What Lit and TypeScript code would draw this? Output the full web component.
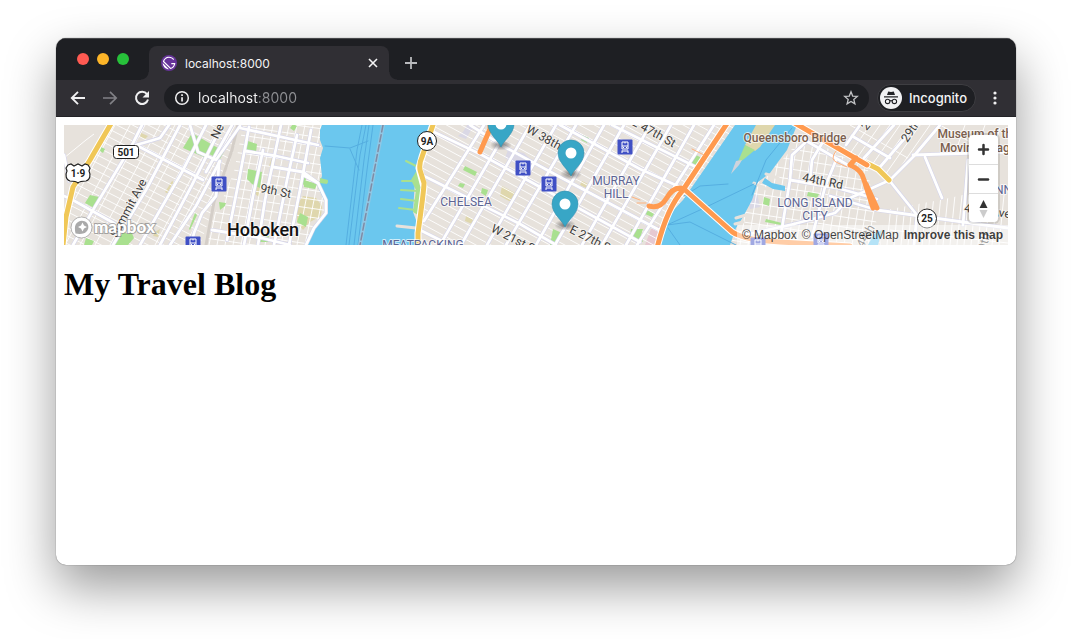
import { LitElement, html, css, svg } from "lit";
import { customElement, state } from "lit/decorators.js";

/** Parallel streets, each running from top to bottom and leaning by `lean`. */
const steep = (from: number, to: number, step: number, lean: number, top = 125, bottom = 245) => {
  let d = "";
  for (let x = from; x <= to; x += step) d += `M${x} ${top}L${x + lean} ${bottom}`;
  return d;
};

/** Parallel cross streets, each running left to right and dropping by `drop`. */
const cross = (left: number, right: number, from: number, to: number, step: number, drop: number) => {
  let d = "";
  for (let y = from; y <= to; y += step) d += `M${left} ${y}L${right} ${y + drop}`;
  return d;
};

const HEIGHTS = "M112 125H238L234 150L200 245H64L74 187L90 160Z";
const HOBOKEN = "M243 125H322L321 148L322 176L318 187L325 202L326 213L315 227L307 245H206L214 215L222 200L234 172Z";
const MANHATTAN = "M433 125H735L683 200L667 217L657 245H418L424 187L419 165Z";
const LIC = "M803 135L868 170L872 196L880 245H730L743 217L758 182L787 155Z";
const QUEENS_EAST = "M885 210L940 200L1008 185V245H880Z";
const QUEENS_NORTH = "M840 125H940L913 153L889 178L868 163L820 137Z";

const WATER = [
  "M322 125L320 130L320 140L323 148L320 158L322 176L318 187L325 202L326 213L315 227L308 237L307 245H416L416 220L413 212L415 180L418 163L424 140L429 125Z",
  "M735 125L683 200L667 217L657 245H730L736 228L743 217L752 200L758 182L770 173L775 166L787 150L797 125Z",
  "M765 178L772 183L785 186V191L773 189L762 183Z",
  "M868 245L874 234L882 230L878 245Z",
];

const PARKS = [
  "M192 133L218 148L215 157L207 153L206 158L183 148Z",
  "M222 150L224 152L220 159L217 157Z",
  "M248 141L257 144L256 152L246 150Z",
  "M248 169L262 172L260 188L252 184L247 179Z",
  "M90 195L99 197L96 209L85 203Z",
  "M189 229L195 213L197 215L190 230Z",
  "M101 147L105 149L103 153L100 151Z",
  "M300 213L308 217L306 227L297 222Z",
  "M86 238L94 241L92 245H84Z",
  "M114 243L120 231H131L134 238L128 245H114Z",
  "M258 237L269 236L268 242H259Z",
  "M293 124L297 126L294 131L290 128Z",
  "M219 202L226 203L225 206L220 210Z",
  "M303 174L307 176L304 185L300 182Z",
  "M304 180L317 184L315 189L304 187Z",
  "M417 170L423 187L418 215L413 212L416 190L411 180Z",
  "M320 178L328 180L327 184L320 183Z",
  "M465 166L477 172L475 176L463 170Z",
  "M482 188L488 190L486 196L481 193Z",
  "M460 183L465 184L463 188L458 186Z",
  "M553 229L562 233L557 245H550Z",
  "M631 229L643 229L641 235L643 242L636 239L630 240Z",
  "M582 135L589 138L587 143L581 140Z",
  "M694 154L702 158L698 167L690 163Z",
  "M647 210L654 214L652 217L645 214Z",
  "M745 145L755 150L744 159L737 164Z",
  "M764 197L770 199L769 206L763 204Z",
  "M808 192L819 194L817 198L807 196Z",
  "M766 219L782 223L781 225L765 222Z",
];

const SAND = [
  "M172 181L177 184L170 195L165 192Z",
  "M141 133L148 136L145 139L140 137Z",
  "M297 205L303 196L316 198L322 206L321 216L310 222L303 230L297 222Z",
  "M272 157L274 158L272 168L269 166Z",
  "M300 204L308 207L307 213L299 209Z",
  "M502 186L517 194L513 203L500 196Z",
  "M466 216L474 220L472 224L465 221Z",
  "M582 181L588 184L586 188L580 185Z",
  "M155 232L160 229L158 237L153 236Z",
  "M256 185L261 188L259 197L254 193Z",
];

const MAIN_ROADS = [
  "M142 125L133 143L123 160L93 210L73 245",
  "M169 125L160 138L150 141L136 145L203 180",
  "M180 125L146 190L113 245",
  "M206 125L182 172L140 245",
  "M222 125L192 185L160 245",
  "M64 196L71 199L112 222L128 232",
  "M190 125L198 152L216 160L240 126",
  "M219 162L218 178L216 196L202 213L194 233L191 245",
  "M220 161L196 206L170 245",
  "M232 125L206 172",
  "M64 155L69 181",
  "M249 127L239 180L227 240",
  "M263 150L253 196L244 245",
  "M281 125L265 200L258 245",
  "M297 135L287 180L274 245",
  "M311 130L300 190L289 245",
  "M245 151L276 156L308 163",
  "M273 167L303 172L318 183",
  "M240 128L318 145",
  "M303 175L318 183L326 200L326 213L314 228L306 245",
  "M212 230L262 238L290 245",
  "M510 125L440 245",
  "M484 125L424 221",
  "M530 125L461 245",
  "M556 125L487 245",
  "M576 125L506 245",
  "M604 125L536 245",
  "M624 125L555 245",
  "M650 125L582 245",
  "M671 125L602 245",
  "M694 125L626 245",
  "M714 125L637 245",
  "M434 132L480 154L640 242",
  "M424 176L520 224L556 245",
  "M470 125L503 146L560 177L663 232",
  "M560 125L640 169L680 187",
  "M612 125L694 166",
  "M420 230L450 245",
  "M805 143L792 155L790 180L780 240",
  "M803 139L853 168",
  "M824 140L812 160L810 181",
  "M790 180L837 188L877 199",
  "M836 160L825 187L812 237",
  "M794 224L835 213L850 198L890 180L913 157L940 125",
  "M913 155L1008 152",
  "M925 157L942 198",
  "M889 180L917 215L914 245",
  "M830 196L877 210L913 215L970 223L1008 228",
  "M968 160L963 225",
  "M860 125L846 145",
  "M894 125L864 158",
  "M852 136L890 158",
  "M916 125L880 167",
  "M736 237L794 224",
];

const FERRIES = [
  "M362 125L357 150L346 245M366 125L360 155L349 245M369 125L364 160L354 245M373 125L367 170L358 245",
  "M325 146L350 148L368 141M350 149L359 170",
  "M667 225L690 222L736 245M667 225L700 210L754 184M668 228L680 245M684 196L700 186L728 184M792 128L766 160L752 195",
];

const RAIL_STOPS = [[219, 184], [193, 244], [523, 168], [549, 184], [625, 147], [758, 245], [821, 241]];
const PINS = [[501, 125], [571, 154], [565, 205]];

const STREET_LABELS: Array<[string, number, number, number]> = [
  ["Summit Ave", 132, 210, -62],
  ["New", 223, 129, -64],
  ["9th St", 275, 195, 11],
  ["W 38th", 542, 141, 29],
  ["E 47th St", 652, 136, 29],
  ["W 21st St", 513, 243, 27],
  ["E 27th St", 590, 243, 27],
  ["44th Rd", 822, 185, 11],
  ["29th", 914, 133, -56],
  ["21st", 874, 122, -50],
  ["43rd Ave", 987, 215, 8],
  ["44th", 869, 238, -60],
  ["39th", 987, 246, -75],
];

@customElement("travel-map")
class TravelMap extends LitElement {
  static styles = css`
    :host { display: block; position: relative; overflow: hidden; height: 120px; font-family: "Liberation Sans", Arial, sans-serif; }
    .canvas { display: block; width: 100%; height: 120px; }
    .line { fill: none; stroke-linecap: round; stroke-linejoin: round; }
    .minor { fill: none; stroke: #fff; stroke-width: 1; opacity: 0.9; }
    .label { font-family: Roboto, "Open Sans", sans-serif; text-anchor: middle; paint-order: stroke; stroke-linejoin: round; stroke: #ffffffb3; stroke-width: 2px; }
    .street { font-size: 12px; fill: #3c3c3c; stroke: #f5f2ee; }
    .area { font-size: 12px; fill: #5d6594; }
    .place { font-size: 12px; font-weight: 500; fill: #7b5f4e; }
    .city { font-size: 18px; font-weight: 500; fill: #111; }
    .shield { font-family: Roboto, sans-serif; font-size: 10px; font-weight: 700; text-anchor: middle; fill: #222; }
    .wordmark { font-family: Lato, sans-serif; font-size: 17px; font-weight: 900; fill: #fff; stroke: #77777799; stroke-width: 2px; paint-order: stroke; }
    .logo { position: absolute; left: 6px; bottom: 4px; display: block; width: 90px; height: 26px; }
    .logo svg { display: block; }
    .zoom { position: absolute; top: 10px; right: 10px; display: flex; flex-direction: column; width: 29px; border-radius: 4px; overflow: hidden; background: #fff; box-shadow: 0 0 0 2px #0000001a; }
    .zoom button { display: block; height: 29px; padding: 0; border: 0; background: none; }
    .zoom button + button { border-top: 1px solid #ddd; }
    .zoom svg { display: block; width: 29px; height: 29px; }
    .credits { position: absolute; right: 0; bottom: 0; display: flex; gap: 5px; padding: 0 5px; background: #ffffff80; font-size: 12px; line-height: 20px; }
    .credits a { color: #000000bf; text-decoration: none; }
    .credits .improve { font-weight: 700; }
  `;

  private rail([x, y]: number[]) {
    return svg`<g transform="translate(${x - 7.5} ${y - 7.5})">
      <rect width="15" height="15" rx="1" fill="#4050c5"></rect>
      <path d="M4.500 2.500h6v7h-6z" fill="none" stroke="#fff" stroke-width="1"></path>
      <path d="M4.500 6.500h6M7.500 2.500v1.500" stroke="#fff" stroke-width="1"></path>
      <path d="M5.500 7.500h1v1h-1zM8.500 7.500h1v1h-1z" fill="#fff"></path>
      <path d="M4.500 11v2.500M10.500 11v2.500M4.500 11.500h6" stroke="#fff" stroke-width="1"></path>
    </g>`;
  }

  private pin([x, y]: number[]) {
    return svg`<g transform="translate(${x} ${y})">
      <ellipse cx="0" cy="20" rx="11" ry="5.500" fill="url(#shade)"></ellipse>
      <path d="M0 22C-2 16-13 9-13-1a13 13 0 0 1 26 0C13 9 2 16 0 22Z" fill="#38a6c6" stroke="#2f8fac" stroke-width=".6"></path>
      <circle cx="0" cy="-1" r="5.500" fill="#fff"></circle>
    </g>`;
  }

  private grid(id: string, area: string, lines: string) {
    return svg`<clipPath id=${id}><path d=${area}></path></clipPath>
      <path class="minor" clip-path="url(#${id})" d=${lines}></path>`;
  }

  render() {
    return html`
      <svg class="canvas" viewBox="64 125 944 120" preserveAspectRatio="xMidYMid slice" role="img" aria-label="Map of Hoboken, Manhattan and Long Island City">
        <defs>
          <radialGradient id="shade"><stop offset="0" stop-opacity=".5"></stop><stop offset="1" stop-opacity="0"></stop></radialGradient>
        </defs>
        <rect x="64" y="125" width="944" height="120" fill="#e7e2dc"></rect>
        ${SAND.map((d) => svg`<path d=${d} fill="#dfd7ad"></path>`)}
        <path d="M645 245L651 229L660 226L655 245Z" fill="#e6c9d1"></path>
        <path d="M463 132L467 125H474L466 139L458 136ZM508 150L524 153L534 163L530 170L505 158ZM748 200L757 193L760 207L750 209Z" fill="#dad8e5"></path>
        ${this.grid("heights", HEIGHTS, steep(70, 300, 15, -65) + cross(64, 240, 50, 245, 8, 90))}
        ${this.grid("hoboken", HOBOKEN, steep(225, 340, 8, -24) + cross(205, 330, 112, 245, 9, 18))}
        ${this.grid("manhattan", MANHATTAN, cross(415, 735, -60, 245, 8, 173))}
        ${this.grid("lic", LIC, steep(760, 910, 8, -20) + cross(730, 890, 110, 245, 10, 24))}
        ${this.grid("east", QUEENS_EAST, steep(885, 1010, 7, -5, 195) + "M880 206L1008 182M890 230L1008 243")}
        ${this.grid("north", QUEENS_NORTH, steep(860, 1100, 10, -84) + "M850 125L920 165")}
        <path class="minor" d="M940 125L990 153M965 125L955 153M985 125L975 153M1000 128L992 153M64 158L86 140L94 134"></path>
        ${WATER.map((d) => svg`<path d=${d} fill="#6bc7ee"></path>`)}
        <path d="M756 125H775L760 147L755 151L745 145Z" fill="#dfd7ad"></path>
        ${PARKS.map((d) => svg`<path d=${d} fill="#a9e08f"></path>`)}
        <path d="M736 161L742 160L739 165L731 174Z" fill="#cfd3dc"></path>
        <path class="line" d="M402 181H418M401 190L418 191M401 199L417 201M399 208L416 210M406 161L416 166M320 182H327" stroke="#a9e08f" stroke-width="2"></path>
        <path class="line" d="M397 226L416 228M735 224L743 222M736 218L746 215M754 183L768 190M766 174L778 178" stroke="#e7e2dc" stroke-width="3"></path>
        ${FERRIES.map((d) => svg`<path class="line" d=${d} stroke="#55aee0" stroke-width="1"></path>`)}
        <path class="line" d="M383 125L360 245" stroke="#a6c6de" stroke-width="4" opacity=".6"></path>
        <path class="line" d="M383 125L360 245" stroke="#818ba4" stroke-width="1.500" stroke-dasharray="7 3"></path>
        <path class="line" d="M238 125L232 150L214 202L206 245" stroke="#d4cec8" stroke-width="3"></path>
        ${MAIN_ROADS.map((d) => svg`<path class="line" d=${d} stroke="#d5d5ea" stroke-width="4"></path>`)}
        ${MAIN_ROADS.map((d) => svg`<path class="line" d=${d} stroke="#fff" stroke-width="2.800"></path>`)}
        <path class="line" d="M112 122L90 160L73 187L66 217L63 245M434 122L422 157L419 168L424 187L418 233V248M866 163L878 169L889 180" stroke="#fff" stroke-width="7"></path>
        <path class="line" d="M112 122L90 160L73 187L66 217L63 245M434 122L422 157Q419 163 420 170L424 183Q424 190 418 233V248M866 163L878 169L889 180" stroke="#f0c757" stroke-width="5"></path>
        <path class="line" d="M728 122L683 190Q667 208 657 248M684 189L730 230Q740 240 780 242L850 246M793 122L867 165" stroke="#fff" stroke-width="7"></path>
        <path class="line" d="M728 122L683 190Q667 208 657 248M649 206Q660 209 666 199Q674 185 684 189L730 230Q740 240 780 242L850 246M793 122L867 165M856 158L850 165Q862 170 864 180L873 208M866 184L877 208M490 122V129L480 152" stroke="#ff9a4f" stroke-width="5"></path>
        <path class="line" d="M632 197L640 200M646 203L637 203M692 149L704 155M836 151Q829 160 838 163L847 167" stroke="#ffb27c" stroke-width="1"></path>

        <g class="labels">
          ${STREET_LABELS.map(([t, x, y, r]) => svg`<text class="label street" transform="translate(${x} ${y}) rotate(${r})">${t}</text>`)}
          <text class="label area" x="466" y="206">CHELSEA</text>
          <text class="label area" x="423" y="249">MEATPACKING</text>
          <text class="label area" x="616" y="185">MURRAY</text>
          <text class="label area" x="616" y="198">HILL</text>
          <text class="label area" x="815" y="207">LONG ISLAND</text>
          <text class="label area" x="815" y="220">CITY</text>
          <text class="label area" x="1012" y="194">SUNNYSIDE</text>
          <text class="label place" x="795" y="142">Queensboro Bridge</text>
          <text class="label place" x="978" y="138">Museum of the</text>
          <text class="label place" x="978" y="152">Moving Image</text>
          <text class="label city" x="263" y="236">Hoboken</text>
        </g>

        <rect x="113.500" y="145.500" width="25" height="13" rx="3" fill="#fff" stroke="#222"></rect>
        <text class="shield" x="126" y="156">501</text>
        <path d="M68 165l3-1 3 2 4-2 4 2 3-2 3 1 2 3-1 3c2 4 1 9-3 10-4 0-6 0-8 2-2-2-4-2-8-2-4-1-5-6-3-10l-1-3z" fill="#fff" stroke="#222" stroke-width="1.200"></path>
        <text class="shield" x="78" y="177">1·9</text>
        <circle cx="427" cy="141" r="9.500" fill="#fff" stroke="#222"></circle>
        <text class="shield" x="427" y="145">9A</text>
        <circle cx="927" cy="218.500" r="9.500" fill="#fff" stroke="#222"></circle>
        <text class="shield" x="927" y="222">25</text>
        ${RAIL_STOPS.map((p) => this.rail(p))}
        ${PINS.map((p) => this.pin(p))}
      </svg>

      <a class="logo" href="#mapbox" aria-label="Mapbox logo">
        <svg width="90" height="26" viewBox="0 0 90 26">
          <circle cx="11.500" cy="12.500" r="10.500" fill="#fff" stroke="#8889" stroke-width="1"></circle>
          <path d="M5.500 18.500C4 11 5.500 9 8 7c3-2.200 6.500-1.500 8.500.5s2.700 5.500.5 8.500c-2 2.500-6 3.500-11.500 2.500z" fill="#aaa"></path>
          <path d="M12.500 7.500l1.500 3 3 1.500-3 1.500-1.500 3-1.500-3-3-1.500 3-1.500z" fill="#fff"></path>
          <text class="wordmark" x="24" y="18">mapbox</text>
        </svg>
      </a>

      <div class="zoom">
        <button type="button" aria-label="Zoom in"><svg viewBox="0 0 29 29"><path d="M14.500 10v9M10 14.500h9" stroke="#333" stroke-width="2.500" stroke-linecap="round"></path></svg></button>
        <button type="button" aria-label="Zoom out"><svg viewBox="0 0 29 29"><path d="M10 14.500h9" stroke="#333" stroke-width="2.500" stroke-linecap="round"></path></svg></button>
        <button type="button" aria-label="Reset bearing to north"><svg viewBox="0 0 29 29"><path d="M10.500 14l4-8 4 8z" fill="#333"></path><path d="M10.500 16l4 8 4-8z" fill="#ccc"></path></svg></button>
      </div>

      <div class="credits">
        <a href="#mapbox">© Mapbox</a>
        <a href="#osm">© OpenStreetMap</a>
        <a class="improve" href="#improve">Improve this map</a>
      </div>
    `;
  }
}

@customElement("app-root")
class AppRoot extends LitElement {
  @state() private address = "localhost:8000";

  static styles = css`
    :host { display: flex; box-sizing: border-box; min-height: 100vh; padding: 38px 56px 74px; background: #fff; }
    .window { flex: 1; min-width: 0; display: flex; flex-direction: column; overflow: hidden; border-radius: 10px; background: #fff; box-shadow: 0 0 1px #000000b3, 0 22px 50px #00000066; font-family: Inter, Roboto, sans-serif; }
    button { padding: 0; border: 0; background: none; color: inherit; font: inherit; display: grid; place-items: center; }
    svg { display: block; }
    .tabs { display: flex; align-items: flex-end; height: 42px; background: #1e1f23; box-shadow: inset 0 1px #47484b; }
    .lights { display: flex; gap: 8px; align-self: center; padding-left: 21px; width: 72px; }
    .light { width: 12px; height: 12px; border-radius: 50%; }
    .red { background: #ff5a52; }
    .yellow { background: #fdb528; }
    .green { background: #27c13a; }
    .tab { position: relative; display: flex; align-items: center; gap: 8px; box-sizing: border-box; width: 240px; height: 34px; padding: 0 8px 0 12px; border-radius: 8px 8px 0 0; background: #302f34; color: #f3f3f4; font-size: 12px; }
    .tab::before, .tab::after { content: ""; position: absolute; bottom: 0; width: 8px; height: 8px; }
    .tab::before { left: -8px; background: radial-gradient(circle at 0 0, transparent 7px, #302f34 8px); }
    .tab::after { right: -8px; background: radial-gradient(circle at 100% 0, transparent 7px, #302f34 8px); }
    .title { flex: 1; }
    .new-tab { width: 44px; height: 34px; color: #b9babd; }
    .bar { display: flex; align-items: center; gap: 8px; box-sizing: border-box; height: 37px; padding: 0 10px; border-bottom: 1px solid #232327; background: #302f34; color: #f0f0f1; }
    .nav { width: 24px; height: 28px; }
    .menu { width: 22px; }
    .off { color: #818186; }
    .omnibox { flex: 1; display: flex; align-items: center; gap: 8px; box-sizing: border-box; height: 28px; margin-left: 2px; padding: 0 10px; border-radius: 14px; background: #1e1f23; }
    .url { flex: 1; min-width: 0; height: 20px; padding: 0; border: 0; outline: 0; background: linear-gradient(90deg, #f5f5f6 60px, #8f9094 60px); background-clip: text; -webkit-background-clip: text; color: transparent; font: 14px/20px Inter, Roboto, sans-serif; }
    .incognito { display: flex; align-items: center; gap: 7px; box-sizing: border-box; height: 28px; padding: 0 8px 0 2px; border: 1px solid #3e3e42; border-radius: 14px; background: #1e1f23; font-size: 13px; font-weight: 500; color: #f3f3f4; }
    .page { padding: 8px; }
    h1 { margin: 21px 0; font: 700 32px/37px "Liberation Serif", "Times New Roman", serif; color: #000; }
  `;

  render() {
    return html`
      <div class="window">
        <header class="tabs">
          <div class="lights">
            <button class="light red" aria-label="Close window"></button>
            <button class="light yellow" aria-label="Minimize window"></button>
            <button class="light green" aria-label="Zoom window"></button>
          </div>
          <div class="tab">
            <svg width="16" height="16" viewBox="0 0 28 28"><circle cx="14" cy="14" r="14" fill="#663399"></circle><path d="M6.200 21.800C4.100 19.700 3 16.900 3 14.200L13.900 25c-2.800-.1-5.600-1.100-7.700-3.200zm10.200 2.900L3.300 11.600C4.400 6.700 8.800 3 14 3c3.700 0 6.900 1.800 8.900 4.500l-1.500 1.300C19.700 6.500 17 5 14 5c-3.900 0-7.200 2.500-8.500 6L17 22.500c2.900-1 5.100-3.500 5.800-6.500H18v-2h7c0 5.200-3.700 9.600-8.600 10.700z" fill="#fff"></path></svg>
            <span class="title">localhost:8000</span>
            <button aria-label="Close tab"><svg width="16" height="16" viewBox="0 0 16 16"><path d="M4 4l8 8M12 4l-8 8" stroke="currentColor" stroke-width="1.600"></path></svg></button>
          </div>
          <button class="new-tab" aria-label="New tab"><svg width="14" height="14" viewBox="0 0 14 14"><path d="M7 1v12M1 7h12" stroke="currentColor" stroke-width="1.800"></path></svg></button>
        </header>

        <nav class="bar">
          <button class="nav" aria-label="Back"><svg width="16" height="16" viewBox="0 0 16 16"><path d="M15 8H2.500M8 1.800L1.800 8 8 14.200" fill="none" stroke="currentColor" stroke-width="1.900"></path></svg></button>
          <button class="nav off" aria-label="Forward" disabled><svg width="16" height="16" viewBox="0 0 16 16"><path d="M1 8h12.500M8 1.800L14.200 8 8 14.200" fill="none" stroke="currentColor" stroke-width="1.700"></path></svg></button>
          <button class="nav" aria-label="Reload"><svg width="16" height="16" viewBox="0 0 16 16"><path d="M13 4.200A6.100 6.100 0 1 0 14 9.500" fill="none" stroke="currentColor" stroke-width="2"></path><path d="M15 1v6.500H8.500z" fill="currentColor"></path></svg></button>
          <div class="omnibox">
            <svg width="16" height="16" viewBox="0 0 16 16"><circle cx="8" cy="8" r="6.300" fill="none" stroke="currentColor" stroke-width="1.500"></circle><path d="M7.200 7.200h1.700v4.300H7.200zM7.200 4.300h1.700V6H7.200z" fill="currentColor"></path></svg>
            <input class="url" aria-label="Address" .value=${this.address} @input=${(e: Event) => (this.address = (e.target as HTMLInputElement).value)} />
            <button aria-label="Bookmark this page"><svg width="16" height="16" viewBox="0 0 16 16"><path d="M8 1.800l1.700 4.300 4.600.3-3.500 3 1.100 4.500L8 11.400l-3.900 2.500 1.100-4.500-3.500-3 4.600-.3z" fill="none" stroke="#c2c3c5" stroke-width="1.300"></path></svg></button>
          </div>
          <button class="incognito">
            <svg width="22" height="22" viewBox="0 0 22 22"><circle cx="11" cy="11" r="11" fill="#f1f1f3"></circle><path d="M7 8l1.200-3.500 2.800.6 2.800-.6L15 8z" fill="#222327"></path><path d="M4 9.800h14" stroke="#222327" stroke-width="1.200"></path><g fill="none" stroke="#222327" stroke-width="1.100"><circle cx="7.600" cy="14.400" r="2.200"></circle><circle cx="14.400" cy="14.400" r="2.200"></circle><path d="M9.800 14q1.200-.8 2.400 0"></path></g></svg>
            Incognito
          </button>
          <button class="nav menu" aria-label="Menu"><svg width="4" height="16" viewBox="0 0 4 16"><g fill="currentColor"><circle cx="2" cy="3" r="1.600"></circle><circle cx="2" cy="8" r="1.600"></circle><circle cx="2" cy="13" r="1.600"></circle></g></svg></button>
        </nav>

        <main class="page">
          <travel-map></travel-map>
          <h1>My Travel Blog</h1>
        </main>
      </div>
    `;
  }
}
